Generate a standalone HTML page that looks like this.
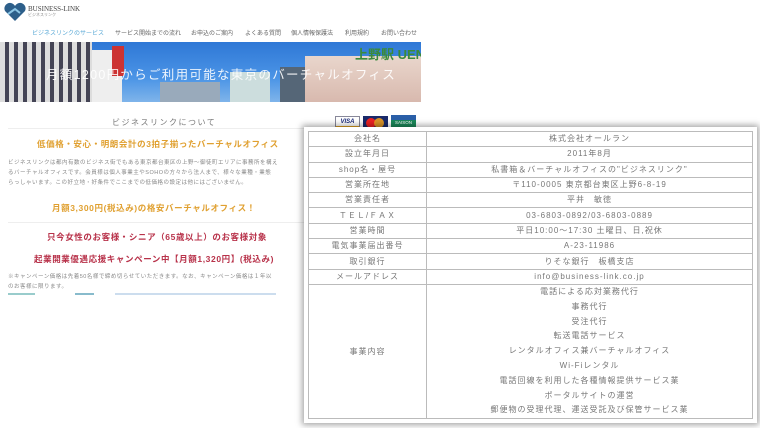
<!DOCTYPE html>
<html><head><meta charset="utf-8"><style>
*{margin:0;padding:0;box-sizing:border-box}
body{width:760px;height:428px;overflow:hidden;background:#fff;position:relative;font-family:"Liberation Sans","Noto Sans CJK JP",sans-serif;color:#777}
.abs{position:absolute;white-space:nowrap}
.nav span{position:absolute;font-size:6px;color:#666;top:28px}
.hero{position:absolute;left:0;top:42px;width:421px;height:60px;overflow:hidden;background:linear-gradient(180deg,#2f78d6 0%,#4b94e6 60%,#7fb4ea 100%)}
table{border-collapse:collapse;position:absolute;left:308px;top:131px;width:445px;font-size:8px;color:#777;letter-spacing:1px}
td{border:1px solid #bbb;text-align:center;height:15.3px;padding:0;line-height:14px}
td.l{width:118px}
</style></head><body>
<svg class="abs" style="left:3px;top:2px" width="24" height="20" viewBox="0 0 24 20"><path d="M12 19 L2 9 A5 5 0 0 1 12 4 A5 5 0 0 1 22 9 Z" fill="#2d5f8a"/><path d="M5 12 L12 7 L17 11" stroke="#8cc6e6" stroke-width="2" fill="none"/></svg>
<div class="abs" style="left:28px;top:5px;font-family:'Liberation Serif',serif;font-size:7px;color:#444">BUSINESS-LINK</div>
<div class="abs" style="left:28px;top:12px;font-size:4px;color:#888">ビジネスリンク</div>
<div class="nav">
<span style="left:32px;color:#5aa9d6">ビジネスリンクのサービス</span>
<span style="left:115px">サービス開始までの流れ</span>
<span style="left:191px">お申込のご案内</span>
<span style="left:245px">よくある質問</span>
<span style="left:291px">個人情報保護法</span>
<span style="left:345px">利用規約</span>
<span style="left:381px">お問い合わせ</span>
</div>
<div class="hero">
<div class="abs" style="left:0;top:0;width:92px;height:60px;background:repeating-linear-gradient(90deg,#ddd 0 5px,#445 5px 9px)"></div>
<div class="abs" style="left:92px;top:8px;width:30px;height:52px;background:#eee"></div>
<div class="abs" style="left:112px;top:4px;width:12px;height:30px;background:#c33"></div>
<div class="abs" style="left:160px;top:40px;width:60px;height:20px;background:#9ab"></div>
<div class="abs" style="left:230px;top:30px;width:40px;height:30px;background:#cdd"></div>
<div class="abs" style="left:280px;top:25px;width:25px;height:35px;background:#567"></div>
<div class="abs" style="left:305px;top:14px;width:116px;height:46px;background:linear-gradient(180deg,#e9d6cc,#d8b9ae)"></div>
<div class="abs" style="left:355px;top:2px;font-size:13px;font-weight:bold;color:#3a8a3a">上野駅 UENO</div>
<div class="abs" style="left:46px;top:22px;font-size:12.5px;color:rgba(255,255,255,.9);letter-spacing:1.3px">月額1200円からご利用可能な東京のバーチャルオフィス</div>
</div>
<div class="abs" style="left:112px;top:117px;font-size:8px;color:#777;letter-spacing:1.5px">ビジネスリンクについて</div>
<div class="abs" style="left:8px;top:128px;width:300px;border-top:1px solid #eee"></div>
<div class="abs" style="left:37px;top:138px;font-size:8.5px;color:#e0a030;font-weight:bold;letter-spacing:.6px">低価格・安心・明朗会計の3拍子揃ったバーチャルオフィス</div>
<div class="abs" style="left:8px;top:158px;font-size:5.5px;color:#888;line-height:10px;letter-spacing:.5px">ビジネスリンクは都内有数のビジネス街でもある東京都台東区の上野～御徒町エリアに事務所を構え<br>るバーチャルオフィスです。会員様は個人事業主やSOHOの方々から法人まで、様々な業種・業態<br>らっしゃいます。この好立地・好条件でここまでの低価格の設定は他にはございません。</div>
<div class="abs" style="left:52px;top:202px;font-size:8.5px;color:#e0a030;font-weight:bold;letter-spacing:.6px">月額3,300円(税込み)の格安バーチャルオフィス！</div>
<div class="abs" style="left:8px;top:222px;width:300px;border-top:1px solid #eee"></div>
<div class="abs" style="left:47px;top:231px;font-size:8.5px;color:#b8324a;font-weight:bold;letter-spacing:.6px">只今女性のお客様・シニア（65歳以上）のお客様対象</div>
<div class="abs" style="left:34px;top:253px;font-size:8.5px;color:#b8324a;font-weight:bold;letter-spacing:.6px">起業開業優遇応援キャンペーン中【月額1,320円】(税込み)</div>
<div class="abs" style="left:8px;top:272px;font-size:5.5px;color:#888;line-height:10px;letter-spacing:.5px">※キャンペーン価格は先着50名様で締め切らせていただきます。なお、キャンペーン価格は１年以<br>のお客様に限ります。</div>
<div class="abs" style="left:8px;top:293px;width:268px;height:2px;background:linear-gradient(90deg,#9cc 0 10%,#fff 10% 25%,#8bc 25% 32%,#fff 32% 40%,#cde 40% 100%)"></div>
<div class="abs" style="left:335px;top:116px;width:25px;height:13px;background:#fff;border:1px solid #889;font-size:6px;font-weight:bold;font-style:italic;color:#1a2a7a;text-align:center;line-height:11px;border-bottom:3px solid #e0a020">VISA</div>
<div class="abs" style="left:363px;top:116px;width:25px;height:14px;background:#1a2a6a"><div style="position:absolute;left:3px;top:2px;width:10px;height:10px;border-radius:50%;background:#e22"></div><div style="position:absolute;left:11px;top:2px;width:10px;height:10px;border-radius:50%;background:#f0a020;opacity:.9"></div></div>
<div class="abs" style="left:391px;top:115px;width:25px;height:15px;background:#1b8a5a;font-size:4.5px;color:#fff;text-align:center;line-height:6px;border-top:5px solid #2a5fa8">SAISON<br>CARD</div>
<div class="abs" style="left:304px;top:127px;width:453px;height:296px;background:#fff;box-shadow:0 0 6px 2px rgba(0,0,0,.35)"></div>
<table>
<tr><td class="l">会社名</td><td>株式会社オールラン</td></tr>
<tr><td class="l">設立年月日</td><td>2011年8月</td></tr>
<tr><td class="l">shop名・屋号</td><td>私書箱＆バーチャルオフィスの"ビジネスリンク"</td></tr>
<tr><td class="l">営業所在地</td><td>〒110-0005 東京都台東区上野6-8-19</td></tr>
<tr><td class="l">営業責任者</td><td>平井　敏徳</td></tr>
<tr><td class="l">ＴＥＬ/ＦＡＸ</td><td>03-6803-0892/03-6803-0889</td></tr>
<tr><td class="l">営業時間</td><td>平日10:00～17:30 土曜日、日,祝休</td></tr>
<tr><td class="l">電気事業届出番号</td><td>A-23-11986</td></tr>
<tr><td class="l">取引銀行</td><td>りそな銀行　板橋支店</td></tr>
<tr><td class="l">メールアドレス</td><td>info@business-link.co.jp</td></tr>
<tr><td class="l">事業内容</td><td style="line-height:14.8px;padding:0">電話による応対業務代行<br>事務代行<br>受注代行<br>転送電話サービス<br>レンタルオフィス兼バーチャルオフィス<br>Wi-Fiレンタル<br>電話回線を利用した各種情報提供サービス業<br>ポータルサイトの運営<br>郵便物の受理代理、運送受託及び保管サービス業</td></tr>
</table>
</body></html>
